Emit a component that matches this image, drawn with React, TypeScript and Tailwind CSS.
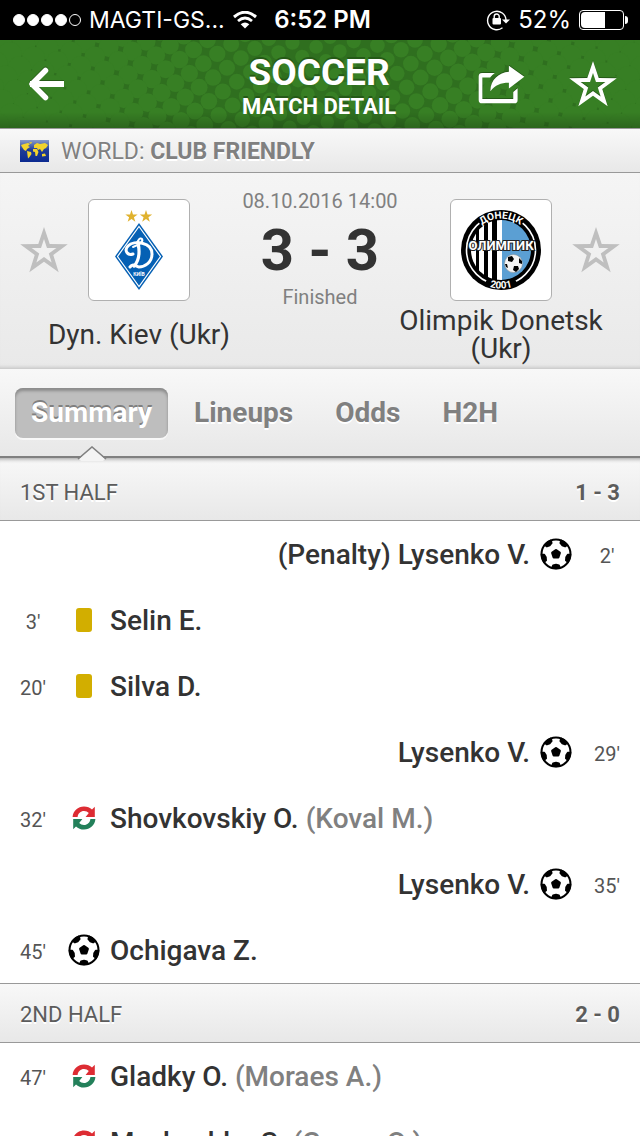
import { ReactNode, useState } from "react";
import clsx from "clsx";

type EventKind = "goal" | "yellow" | "sub";

type MatchEvent = {
  side: "home" | "away";
  minute: number;
  kind: EventKind;
  player: string;
  note?: string;
};

type Half = {
  title: string;
  score: string;
  events: MatchEvent[];
};

const halves: Half[] = [
  {
    title: "1ST HALF",
    score: "1 - 3",
    events: [
      { side: "away", minute: 2, kind: "goal", player: "(Penalty) Lysenko V." },
      { side: "home", minute: 3, kind: "yellow", player: "Selin E." },
      { side: "home", minute: 20, kind: "yellow", player: "Silva D." },
      { side: "away", minute: 29, kind: "goal", player: "Lysenko V." },
      { side: "home", minute: 32, kind: "sub", player: "Shovkovskiy O.", note: "(Koval M.)" },
      { side: "away", minute: 35, kind: "goal", player: "Lysenko V." },
      { side: "home", minute: 45, kind: "goal", player: "Ochigava Z." },
    ],
  },
  {
    title: "2ND HALF",
    score: "2 - 0",
    events: [
      { side: "home", minute: 47, kind: "sub", player: "Gladky O.", note: "(Moraes A.)" },
      { side: "home", minute: 57, kind: "sub", player: "Myakushko S.", note: "(Gusev O.)" },
    ],
  },
];

const tabs = ["Summary", "Lineups", "Odds", "H2H"];

const starPoints = (cx: number, cy: number, r: number) =>
  Array.from({ length: 10 }, (_, i) => {
    const radius = i % 2 === 0 ? r : r * 0.39;
    const angle = -Math.PI / 2 + (i * Math.PI) / 5;
    return `${(cx + radius * Math.cos(angle)).toFixed(2)} ${(cy + radius * Math.sin(angle)).toFixed(2)}`;
  }).join("L");

const StarIcon = ({ className }: { className?: string }) => (
  <svg viewBox="0 0 48 48" className={className} fill="currentColor" aria-hidden="true">
    <path fillRule="evenodd" d={`M${starPoints(24, 26, 25)}ZM${starPoints(24, 26, 13)}Z`} />
  </svg>
);

const ShareIcon = () => (
  <svg viewBox="478 195 140 116" className="h-[39px] w-[47px]" fill="currentColor" aria-hidden="true">
    <path d="M528 219H490a10 10 0 0 0-10 10V299a10 10 0 0 0 10 10H586a10 10 0 0 0 10-10V264L583 275V296H491V232H514Q520 225 528 219Z" />
    <path d="M570 197L616 230L570 265V248C545 248 530 255 515 273C514 240 540 217 570 215Z" />
  </svg>
);

const BackIcon = () => (
  <svg viewBox="0 0 36 34" className="h-[34px] w-9" fill="none" stroke="currentColor" aria-hidden="true">
    <path d="M17.500 3.500L4 17L17.500 30.500" strokeWidth="5.500" strokeLinecap="round" strokeLinejoin="round" />
    <path d="M5 17H33" strokeWidth="6" strokeLinecap="square" />
  </svg>
);

const BallIcon = ({ className }: { className?: string }) => (
  <svg viewBox="0 0 32 32" className={className} aria-hidden="true">
    <circle cx="16" cy="16" r="14.500" fill="#fff" stroke="#000" strokeWidth="2" />
    <path d="M16 12.300L19.600 14.900L18.200 19.200H13.800L12.400 14.900Z" stroke="#000" strokeWidth="2.600" strokeLinejoin="round" />
    {[0, 72, 144, 216, 288].map((angle) => (
      <path key={angle} d="M12 30L13 27.300L16 26.600L19 27.300L20 30L16 30.500Z" stroke="#000" strokeWidth="1.600" strokeLinejoin="round" transform={`rotate(${angle} 16 16)`} />
    ))}
  </svg>
);

const SubIcon = () => (
  <svg viewBox="0 0 24 24" className="h-6 w-6" aria-hidden="true">
    <path d="M.6 11C1 5 6 .5 12 .5C15.200 .5 18 1.700 20 3.600L22.800 .8V11H13.600L16.800 7C15.500 5.700 14 5 12 5C8.600 5 6 7.500 5.600 11Z" fill="#dd2c33" />
    <path d="M.6 11C1 5 6 .5 12 .5C15.200 .5 18 1.700 20 3.600L22.800 .8V11H13.600L16.800 7C15.500 5.700 14 5 12 5C8.600 5 6 7.500 5.600 11Z" fill="#23805a" transform="rotate(180 12 12)" />
  </svg>
);

const WifiIcon = () => (
  <svg viewBox="0 0 24 18" className="h-[18px] w-6" fill="none" stroke="#fff" aria-hidden="true">
    <path d="M1 6Q12-3.500 23 6" strokeWidth="3" />
    <path d="M5 10Q12 4 19 10" strokeWidth="2.800" />
    <path d="M12 17.500L7.700 13.200Q12 9.600 16.300 13.200Z" fill="#fff" stroke="none" />
  </svg>
);

const RotationLockIcon = () => (
  <svg viewBox="0 0 24 22" className="h-[22px] w-6" fill="none" stroke="#fff" aria-hidden="true">
    <path d="M16.500 18.700A9.200 9.200 0 1 1 20 11" strokeWidth="1.400" />
    <path d="M16 10.500H24L20 14.500Z" fill="#fff" stroke="none" />
    <rect x="6.500" y="9" width="8.500" height="6.500" rx="1" fill="#fff" stroke="none" />
    <path d="M8.200 9V7.500a2.500 2.500 0 0 1 5 0V9" strokeWidth="1.400" />
  </svg>
);

// halftone: dots grow towards both edges until only small gaps are left
const Halftone = () => {
  const step = 17;
  const turn = (55 * Math.PI) / 180;
  const dots: ReactNode[] = [];
  for (let i = -30; i <= 50; i++) {
    for (let j = -50; j <= 30; j++) {
      const x = step * (i * Math.cos(turn) - j * Math.sin(turn));
      const y = step * (i * Math.sin(turn) + j * Math.cos(turn));
      if (x < -12 || x > 652 || y < -12 || y > 100) continue;
      const edge = Math.abs(x - 325) / 325;
      dots.push(<circle key={`${i}:${j}`} cx={x} cy={y} r={6.8 + Math.pow(edge, 1.2) * 5.2} />);
    }
  }
  return (
    <svg viewBox="0 0 640 88" preserveAspectRatio="xMidYMid slice" className="absolute inset-0 h-full w-full" fill="#377f24" aria-hidden="true">
      {dots}
    </svg>
  );
};

const WorldFlag = () => (
  <svg viewBox="0 0 29 22" className="h-[22px] w-[29px]" aria-hidden="true">
    <defs>
      <linearGradient id="sea" x1="0" y1="0" x2="0" y2="1">
        <stop offset="0" stopColor="#8a9cc8" />
        <stop offset="0.450" stopColor="#1f3c97" />
        <stop offset="1" stopColor="#0b2a91" />
      </linearGradient>
    </defs>
    <rect width="29" height="22" fill="url(#sea)" />
    <g fill="#f2d32c">
      <path d="M1 5L4 4L8 3L10 4L8 6L10 7L7 9L6 11L4 10L2 7Z" />
      <path d="M7 11L11 12L11.500 14L9.500 17L8 18.500L7.500 15Z" />
      <path d="M9 2.500L12 2L11 4Z" />
      <path d="M14 5L17 3L20 4L25 3L28 5L26 8L24 9L22 12L20 9L18 10L17 8L14 8Z" />
      <path d="M13 9L17 9L18.500 12L17 16L15.500 16L15 12L13 11.500Z" />
      <path d="M22 14L25 13.500L26 16L22 16.500Z" />
    </g>
  </svg>
);

const KievCrest = () => (
  <svg viewBox="0 0 100 100" className="h-full w-full" role="img" aria-label="Dyn. Kiev">
    <path d={`M${starPoints(42.5, 16.5, 6.5)}Z`} fill="#e0b22e" />
    <path d={`M${starPoints(57, 16.5, 6.5)}Z`} fill="#e0b22e" />
    <path d="M50 23L74 56.500L50 90L26 56.500Z" fill="#0560b4" />
    <path d="M50 26.500L71.500 56.500L50 86.500L28.500 56.500Z" fill="none" stroke="#fff" strokeWidth="1.200" />
    <g fill="none" stroke="#fff" strokeLinecap="round">
      <path d="M49 42C51 52 50 61 45 66" strokeWidth="3.200" />
      <path d="M49 47C47 41 51 37 53 39C55 42 49 45 44 47" strokeWidth="2" />
      <path d="M44 54C38 56 35 50 39 46C45 40 63 42 63 54C63 63 55 67 50 67C46 66 44 63 41 67" strokeWidth="3" />
    </g>
    <text x="50" y="76" textAnchor="middle" fill="#fff" fontSize="5" fontWeight="700" fontFamily="Roboto, sans-serif">
      КИЇВ
    </text>
  </svg>
);

const OlimpikCrest = () => (
  <svg viewBox="0 0 100 100" className="h-full w-full" role="img" aria-label="Olimpik Donetsk">
    <defs>
      <clipPath id="disc">
        <circle cx="50" cy="50" r="30" />
      </clipPath>
      <path id="arcTop" d="M18.500 50A31.500 31.500 0 0 1 81.500 50" />
      <path id="arcBottom" d="M11.500 50A38.500 38.500 0 0 0 88.500 50" />
    </defs>
    <circle cx="50" cy="50" r="40" fill="#000" />
    <circle cx="50" cy="50" r="34.500" fill="none" stroke="#fff" strokeWidth="1.600" />
    <path d="M27 21A36 36 0 0 1 73 21L68 29A28 28 0 0 0 32 29Z" />
    <path d="M34 83A36 36 0 0 0 66 83L62 76A28 28 0 0 1 38 76Z" />
    <g clipPath="url(#disc)">
      <rect x="50" y="18" width="32" height="64" fill="#5b9fd3" />
      <path d="M20 18h5v64h-5zM28 18h5v64h-5zM37 18h4v64h-4zM46 18h5v64h-5z" fill="#fff" />
    </g>
    <g fontFamily="Roboto, sans-serif" fontWeight="700" fill="#fff" textAnchor="middle">
      <text fontSize="10">
        <textPath href="#arcTop" startOffset="50%">ДОНЕЦК</textPath>
      </text>
      <text fontSize="10">
        <textPath href="#arcBottom" startOffset="50%">2001</textPath>
      </text>
      <text x="50" y="50" fontSize="13" stroke="#222" strokeWidth="2" paintOrder="stroke">
        ОЛИМПИК
      </text>
    </g>
    <circle cx="62.500" cy="63.500" r="9" fill="#f4f4f4" stroke="#888" strokeWidth="0.500" />
    <path d="M57 57l4-1 2 3-2 3-4-1zM68 58l3 3v3l-3-1zM63 66l4 0 1 3-3 3-3-2zM54 64l2 0 1 4-2-1z" />
  </svg>
);

const StatusBar = () => (
  <div className="grid h-10 shrink-0 grid-cols-[1fr_auto_1fr] items-center bg-black pr-3 pl-[13px] font-[Inter,sans-serif] text-[23px] text-white">
    <div className="flex items-center">
      <div className="mr-2 flex gap-[2px]">
        {[1, 2, 3, 4, 5].map((dot) => (
          <span key={dot} className={clsx("h-3 w-3 rounded-full border border-white", dot < 5 && "bg-white")} />
        ))}
      </div>
      <span>MAGTI-GS...</span>
      <span className="ml-2">
        <WifiIcon />
      </span>
    </div>
    <span className="pl-1 text-2xl font-semibold">6:52 PM</span>
    <div className="flex items-center justify-end">
      <RotationLockIcon />
      <span className="mx-2">
        <span className="text-2xl">52%</span>
      </span>
      <span className="flex h-5 w-[45px] rounded border border-white p-px">
        <span className="w-6 rounded-l-sm bg-white" />
      </span>
      <span className="ml-px h-2 w-[3px] rounded-r-sm bg-white" />
    </div>
  </div>
);

const EventIcon = ({ kind }: { kind: EventKind }) => {
  if (kind === "goal") return <BallIcon className="h-8 w-8" />;
  if (kind === "sub") return <SubIcon />;
  return <span className="h-6 w-4 rounded-[3px] bg-[#d2ae00]" />;
};

const EventRow = ({ event }: { event: MatchEvent }) => (
  <li className={clsx("flex h-[66px] items-center pt-0.5", event.side === "away" && "flex-row-reverse")}>
    <span className="w-[66px] pt-0.5 text-center text-xl text-[#555]">{event.minute}'</span>
    <span className="flex w-9 justify-center pb-0.5">
      <EventIcon kind={event.kind} />
    </span>
    <span className="px-2 text-[28px] font-medium text-[#333]">
      {event.player} {event.note && <span className="text-[#808080]">{event.note}</span>}
    </span>
  </li>
);

const Crest = ({ children }: { children: ReactNode }) => (
  <div className="h-[102px] w-[102px] rounded-md border border-[#b0b0b0] bg-white">{children}</div>
);

const App = () => {
  const [activeTab, setActiveTab] = useState("Summary");

  return (
    <div className="flex h-screen flex-col overflow-hidden bg-white font-[Roboto,sans-serif]">
      <StatusBar />

      <header className="relative flex h-[88px] shrink-0 items-center justify-between bg-[#2f6f1f] pr-[23px] pl-6 text-white">
        <Halftone />
        <div className="absolute inset-x-0 bottom-0 h-4 bg-linear-to-b from-transparent to-black/20" />
        <button aria-label="Back" className="relative mr-[92px] flex w-11 justify-center drop-shadow-[0_-1px_0_#255a17]">
          <BackIcon />
        </button>
        <h1 className="relative pt-1.5 text-center font-bold [text-shadow:0_-2px_0_#255a17]">
          <span className="block text-[37px] leading-10">SOCCER</span>
          <span className="block text-[22px] leading-7">MATCH DETAIL</span>
        </h1>
        <div className="relative flex items-center gap-11 drop-shadow-[0_-1px_0_#255a17]">
          <button aria-label="Share">
            <ShareIcon />
          </button>
          <button aria-label="Add to favourites">
            <StarIcon className="h-12 w-12" />
          </button>
        </div>
      </header>

      <div className="flex h-[45px] shrink-0 items-center gap-3 border-y border-[#999] bg-linear-to-b from-[#f8f8f8] to-[#e8e8e8] px-5 text-[23px] text-[#808080] [text-shadow:0_2px_0_#fff]">
        <WorldFlag />
        <p className="pt-1">
          WORLD: <b>CLUB FRIENDLY</b>
        </p>
      </div>

      <section className="shrink-0 bg-linear-to-b from-[#f5f5f5] to-[#e9e9e9] pt-4 pb-1.5 shadow-[inset_0_-5px_4px_-4px_#bbb]">
        <div className="flex items-start justify-between px-5">
          <div className="flex items-center gap-5 pt-[10px]">
            <button aria-label="Follow Dyn. Kiev" className="text-[#bfbfbf]">
              <StarIcon className="h-12 w-12" />
            </button>
            <Crest>
              <KievCrest />
            </Crest>
          </div>
          <div className="text-center text-[#808080]">
            <p className="text-xl leading-6">08.10.2016 14:00</p>
            <p className="text-[58px] leading-[74px] font-bold text-[#333]">3 - 3</p>
            <p className="text-xl leading-5">Finished</p>
          </div>
          <div className="flex items-center gap-5 pt-[10px]">
            <Crest>
              <OlimpikCrest />
            </Crest>
            <button aria-label="Follow Olimpik Donetsk" className="text-[#bfbfbf]">
              <StarIcon className="h-12 w-12" />
            </button>
          </div>
        </div>
        <div className="flex items-center justify-between px-8 text-center text-[28px] leading-7 text-[#333]">
          <p className="w-[214px]">Dyn. Kiev (Ukr)</p>
          <p className="w-[214px]">Olimpik Donetsk (Ukr)</p>
        </div>
      </section>

      <nav className="relative flex h-[89px] shrink-0 items-center gap-[10px] border-b-2 border-[#808080] bg-linear-to-b from-[#f8f8f8] to-[#e8e8e8] px-[15px]">
        {tabs.map((tab) => (
          <button
            key={tab}
            onClick={() => setActiveTab(tab)}
            className={clsx(
              "relative h-[50px] rounded-lg px-4 text-[28px] font-bold",
              tab === activeTab
                ? "bg-[#bebebe] text-white shadow-[inset_0_3px_3px_#8c8c8c,0_2px_0_#f8f8f8] [text-shadow:0_-2px_0_#808080]"
                : "text-[#808080] [text-shadow:0_2px_0_#fff]",
            )}
          >
            {tab}
            {tab === activeTab && (
              <svg viewBox="0 0 30 16" className="absolute top-full left-1/2 mt-2 h-4 w-[30px] -translate-x-1/2" aria-hidden="true">
                <path d="M2 13L15 1L28 13L26 15H4Z" fill="#f4f4f4" />
                <path d="M1 13L15 1L29 13" fill="none" stroke="#808080" strokeWidth="1.600" />
              </svg>
            )}
          </button>
        ))}
      </nav>

      <main>
        {halves.map((half, index) => (
          <section key={half.title}>
            <h2
              className={clsx(
                "flex items-center justify-between border-b border-[#999] bg-linear-to-b from-[#f8f8f8] to-[#e8e8e8] px-5 text-[22px] text-[#5c5c5c] [text-shadow:0_2px_0_#fff]",
                index === 0 ? "h-[63px] pt-1.5 shadow-[inset_0_5px_4px_-4px_#999]" : "h-[60px] border-t pt-0.5",
              )}
            >
              <span>{half.title}</span>
              <b>{half.score}</b>
            </h2>
            <ul>
              {half.events.map((event) => (
                <EventRow key={`${event.minute}-${event.player}`} event={event} />
              ))}
            </ul>
          </section>
        ))}
      </main>
    </div>
  );
};

export default App;
